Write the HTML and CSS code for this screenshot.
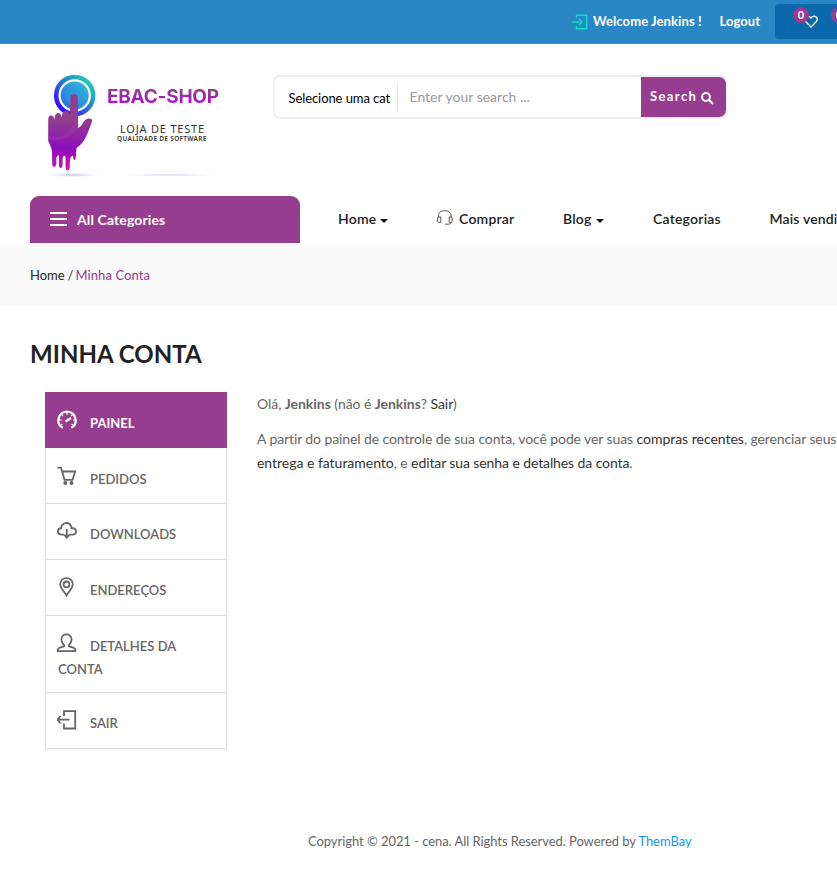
FILE: index.html
```html
<!DOCTYPE html>
<html lang="pt-BR">
<head>
<meta charset="utf-8">
<title>Minha Conta</title>
<link rel="stylesheet" href="styles.css">
</head>
<body>
<div class="topbar">
  <svg class="login-icon" viewBox="0 0 16 16"><path d="M4.500 4V1.200H14.700V14.800H4.500V12M0 8H10M7 4.800L10.200 8L7 11.200"/></svg>
  <span class="welcome">Welcome Jenkins !</span>
  <a class="logout">Logout</a>
  <div class="tools">
    <svg class="heart" viewBox="0 0 14 13"><path d="M7 12L1.600 6.500C-.6 3.800 2 .2 5.200 1.500C6.300 2 7 3.100 7 3.100S7.700 2 8.800 1.500C12 .2 14.600 3.800 12.400 6.500Z"/></svg>
    <span class="badge">0</span>
    <span class="badge badge-cart">0</span>
  </div>
</div>
<header class="header">
  <a class="logo">
    <svg class="logo-art" viewBox="0 0 220 120">
      <defs>
        <linearGradient id="ring" x1="0" y1="1" x2="1" y2="0"><stop offset=".15" stop-color="#3810ff"/><stop offset=".55" stop-color="#267dd5"/><stop offset="1" stop-color="#20e6ad"/></linearGradient>
        <linearGradient id="disc" x1="0" y1="1" x2="1" y2="0"><stop stop-color="#236be5"/><stop offset="1" stop-color="#38bfd5"/></linearGradient>
        <linearGradient id="hand" x1="0" y1="0" x2="0" y2="1"><stop offset=".35" stop-color="#923d8f"/><stop offset=".72" stop-color="#8b0dbb"/><stop offset="1" stop-color="#e010b0"/></linearGradient>
        <radialGradient id="shade"><stop stop-color="#bcbde0"/><stop offset="1" stop-color="#fff" stop-opacity="0"/></radialGradient>
      </defs>
      <circle cx="44.700" cy="35.500" r="18.500" fill="none" stroke="url(#ring)" stroke-width="4.500"/>
      <circle cx="44.700" cy="35.500" r="14" fill="url(#disc)"/>
      <circle cx="44.700" cy="35.500" r="9.500" fill="#27a0dc" opacity=".5"/>
      <g transform="translate(0 9)">
        <path fill="url(#hand)" d="M18.200 51Q18.200 46.500 21 46.500Q24 46.500 24.500 51Q24.700 44 28 44Q31.200 44 31.600 49Q32 42 35.600 42Q39.500 42 40 46L40.300 28.500Q40.500 25 44 25Q47.500 25 47.800 28.500L48.200 59Q51 58 53 54Q56 48 61 50C63.500 50.500 61.500 54 60 58C57 66 54 74 46.500 79L46 86Q45.500 91 44.300 91Q43 91 43.200 87Q40 86 39.700 94V99Q39 101.500 37.500 101.500Q35.800 101.500 35.700 99L35.500 88Q34 85 32.700 89L32.500 97Q32 99 30.500 99Q29 99 29 97V87Q27.600 85 26.400 89V95Q25.700 98 24 98Q22.300 98 22.200 95L22 82Q21 77 18.200 72Z"/>
        <path fill="#b34fb1" opacity=".2" d="M18.200 67Q42 72 47.500 43L48.200 59Q36 75 18.200 70Z"/>
      </g>
      <ellipse cx="43" cy="115" rx="33" ry="2.500" fill="url(#shade)"/>
      <ellipse cx="139" cy="115" rx="60" ry="1.300" fill="url(#shade)"/>
    </svg>
    <span class="logo-name">EBAC-SHOP</span>
    <span class="logo-sub">LOJA DE TESTE</span>
    <span class="logo-tag">QUALIDADE DE SOFTWARE</span>
  </a>
  <div class="search">
    <span class="search-cat">Selecione uma cat</span>
    <span class="search-input">Enter your search ...</span>
    <span class="search-btn">Search <svg viewBox="0 0 13 13"><circle cx="5" cy="5" r="3.900"/><path d="M8 8L12 12"/></svg></span>
  </div>
</header>
<nav class="nav">
  <div class="all-cats"><i class="bars"></i><span>All Categories</span></div>
  <a class="nav-home">Home<i class="caret"></i></a>
  <a class="nav-buy"><svg viewBox="0 0 16 15"><path d="M1.500 7V5.500C1.500 2.500 4 .7 7.700 .7S14 2.500 14 5.500V7M3.800 7H1.500Q.6 7 .6 8V11.500Q.6 12.400 1.500 12.400H3.800ZM12.200 7H14Q15.200 7 15.200 8V11.500Q15.200 12.400 14 12.400H12.200ZM13.800 12.500Q13.800 14.200 11.500 14.200H8"/></svg><span>Comprar</span></a>
  <a class="nav-blog">Blog<i class="caret"></i></a>
  <a class="nav-cat">Categorias</a>
  <a class="nav-best">Mais vendi</a>
</nav>
<div class="crumbs"><a>Home</a><span class="sep"> / </span><span class="here">Minha Conta</span></div>
<main class="main">
  <h1>MINHA CONTA</h1>
  <div class="account">
    <ul class="menu">
      <li class="active"><svg viewBox="0 0 20 20"><path class="thick" d="M5.800 17.800C-1.500 14 .5 2 10 1.500C19.500 2 21.500 14 14.200 17.800"/><path d="M8.500 11.500L14 8" class="thick"/><path class="ticks" d="M10 2V5M4.500 4.500L6.200 6.200M15.500 4.500L14 6M2 10H4.800M18 10H16M4 15L5.500 14M16 15L14.500 14"/></svg><span>PAINEL</span></li>
      <li><svg viewBox="0 0 20 20"><path d="M.3 1.700H4L7.500 13.800H15.500L18.200 5.500H5.200"/><circle cx="8.300" cy="17" r="1.100"/><circle cx="14.500" cy="17" r="1.100"/></svg><span>PEDIDOS</span></li>
      <li class="raised"><svg viewBox="0 0 20 20"><path d="M7 13.700H5C-.5 13.300 0 7.500 4.200 7C4.300 2.800 9.500 .5 13 3.300Q14.500 4.800 14.500 7C20 7 20.500 13 16 13.700H12.500M9.800 8V16.500M7 13.700L9.800 16.700L12.600 13.700"/></svg><span>DOWNLOADS</span></li>
      <li class="raised"><svg viewBox="0 0 20 20"><path d="M9.500 18.500C7.500 15 3.200 11 3.200 7.200C3.200 -.9 15.800 -.9 15.800 7.200C15.800 11 11.500 15 9.500 18.500Z"/><circle cx="9.500" cy="7.400" r="2.900"/></svg><span>ENDEREÇOS</span></li>
      <li class="raised tall"><svg viewBox="0 0 20 20"><path d="M7 12C3 8.500 3.800 1.300 9.500 1.300S16 8.500 12 12V13.300C14 14.500 18.300 14 18.300 17V18.200H.7V17C.7 14 5 14.500 7 13.300Z"/></svg><span>DETALHES DA CONTA</span></li>
      <li class="raised"><svg viewBox="0 0 20 20"><path d="M7 6V1.200H18.200V18.500H7V13.500M0 9.700H12.500M3.700 6L.3 9.700L3.700 13.400"/></svg><span>SAIR</span></li>
    </ul>
    <div class="content">
      <p>Olá, <strong>Jenkins</strong> (não é <strong>Jenkins</strong>? <a>Sair</a>)</p>
      <p>A partir do painel de controle de sua conta, você pode ver suas <a>compras recentes</a>, gerenciar seus<br><a>entrega e faturamento</a>, e <a class="edit">editar sua senha e detalhes da conta</a>.</p>
    </div>
  </div>
</main>
<footer class="footer"><div class="copyright">Copyright © 2021 - cena. All Rights Reserved. Powered by <a>ThemBay</a></div></footer>
</body>
</html>
```
FILE: styles.css
```css
* { box-sizing: border-box; }
body { margin: 0; width: 837px; height: 887px; overflow: hidden; background: #fff; font: 14px/24px Lato, sans-serif; color: #666; }
svg { fill: none; stroke: currentColor; flex: none; }
.topbar { height: 44px; padding: 4px 0 0 572px; background: #2a87c5; border-bottom: 1px solid #3e92c8; display: flex; color: #fff; font-weight: 700; font-size: 13px; line-height: 35px; white-space: nowrap; }
.login-icon { width: 16px; height: 16px; margin: 10px 5px 0 0; color: #0be0ca; stroke-width: 1.4; }
.welcome { width: 126.500px; flex: none; letter-spacing: .1px; }
.logout { width: 55.500px; flex: none; letter-spacing: .05px; }
.tools { position: relative; width: 62px; height: 35px; background: #0969ab; border-radius: 4px 0 0 4px; flex: none; overflow: hidden; }
.heart { position: absolute; left: 29px; top: 11px; width: 14px; height: 13px; stroke-width: 1.3; }
.badge { position: absolute; left: 18px; top: 3px; width: 16px; height: 16px; border-radius: 8px; background: #963d8f; text-align: center; font-size: 11px; line-height: 16px; }
.badge-cart { left: 56px; }
.header { height: 152px; padding-left: 30px; display: flex; }
.logo { position: relative; width: 243px; }
.logo svg { stroke: none; }
.logo-art { position: absolute; left: 0; top: 16px; width: 220px; height: 120px; }
.logo-name, .logo-sub, .logo-tag { position: absolute; white-space: nowrap; }
.logo-name { left: 77px; top: 42px; font: 700 19px/22px Inter, sans-serif; letter-spacing: -.25px; background: linear-gradient(#923d91 20%, #ac10d4 80%); -webkit-background-clip: text; background-clip: text; color: transparent; }
.logo-sub { left: 90px; top: 79px; font: 11px/12px "Noto Sans", sans-serif; letter-spacing: .8px; color: #333; }
.logo-tag { left: 87px; top: 91px; font: 600 6.500px/8px "Noto Sans", sans-serif; letter-spacing: .3px; color: #333; }
.search { margin-top: 31px; width: 454px; height: 44px; border: 2px solid #efefef; border-radius: 7px; display: flex; white-space: nowrap; }
.search-cat { width: 123px; height: 30px; margin-top: 5px; padding-left: 13.500px; border-right: 1px solid #e5e5e5; color: #000; font-size: 13px; line-height: 33px; letter-spacing: -.08px; flex: none; }
.search-input { width: 243px; padding-left: 11.500px; line-height: 39px; color: #999; flex: none; }
.search-btn { width: 85px; height: 40px; padding-left: 9px; border-radius: 0 7px 7px 0; background: #963d8f; color: #fff; font-weight: 700; font-size: 13px; line-height: 39px; letter-spacing: 1.400px; flex: none; }
.search-btn svg { width: 13px; height: 13px; vertical-align: -4px; stroke-width: 2; margin-left: -1px; }
.nav { height: 48px; padding-left: 30px; display: flex; color: #1d1d1d; font-weight: 600; font-size: 14px; line-height: 46px; letter-spacing: .22px; white-space: nowrap; }
.all-cats { width: 270px; height: 47px; margin-right: 38px; padding-left: 19.500px; display: flex; flex: none; background: #963d8f; border-radius: 9px 9px 0 0; color: #fff; font-weight: 700; line-height: 48px; letter-spacing: .12px; }
.bars { width: 17px; height: 14px; margin: 16px 10.500px 0 0; border-top: 2px solid; border-bottom: 2px solid; border-radius: 1px; }
.bars::after { content: ""; display: block; height: 2px; margin-top: 4px; background: #fff; }
.caret { display: inline-block; margin-left: 4px; border: 4px solid transparent; border-top-color: #111; border-bottom: 0; vertical-align: 1px; }
.nav a { flex: none; }
.nav-home { width: 99px; }
.nav-buy { width: 126px; display: flex; }
.nav-buy svg { width: 16px; height: 15px; margin: 14px 6px 0 0; stroke-width: 1; color: #555; }
.nav-blog { width: 90px; }
.nav-cat { width: 116.500px; }
.nav-best { letter-spacing: .15px; }
.crumbs { height: 62px; padding-left: 30px; background: #fafafa; line-height: 62px; font-size: 13px; color: #333; white-space: pre; }
.crumbs a { color: #222; }
.sep { letter-spacing: -.6px; }
.here { color: #963d8f; letter-spacing: .1px; }
.main { height: 514px; padding: 32px 0 0 30px; }
h1 { margin: 0 0 22px; font-size: 24px; line-height: 32px; font-weight: 700; color: #222; letter-spacing: .05px; }
.account { display: flex; padding-left: 15px; }
.menu { width: 182px; margin: 0; padding: 0; list-style: none; font-size: 13px; font-weight: 600; line-height: 23px; flex: none; }
.menu li { height: 56px; padding: 18px 12px 0; border: solid #dedede; border-width: 0 1px 1px; }
.menu li.active { background: #963d8f; border-color: #963d8f; color: #fff; font-weight: 700; }
.menu li.tall { height: 77px; }
.menu li.raised { padding-top: 17px; }
.menu svg { width: 20px; height: 20px; margin: 0 13px 0 -1px; vertical-align: -2px; stroke-width: 1.8; }
.menu .thick { stroke-width: 2.2; }
.menu .ticks { stroke-width: 1.2; }
.content { margin-left: 30px; white-space: nowrap; }
.content p { margin: 0 0 11px; letter-spacing: -.1px; }
.content p:first-child { letter-spacing: -.05px; }
.content a { color: #333; }
.content p + p a { letter-spacing: -.02px; }
.content p + p .edit { letter-spacing: -.1px; }
.footer { padding: 9px 0 0 308px; font-size: 13px; letter-spacing: -.06px; }
.footer a { color: #1395ed; }
```
